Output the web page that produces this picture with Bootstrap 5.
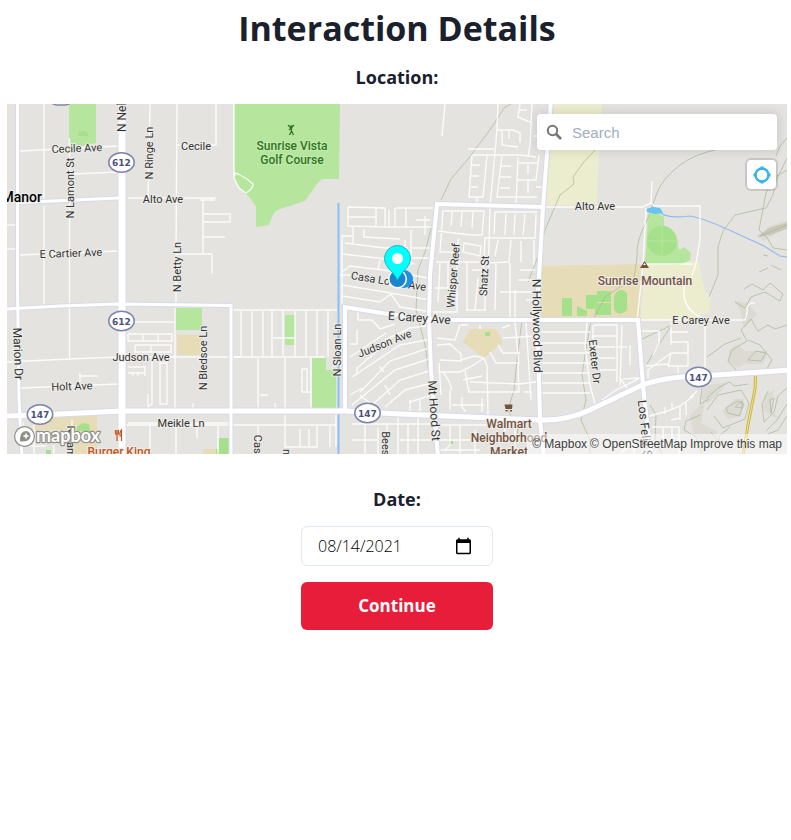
<!DOCTYPE html>
<html lang="en">
<head>
<meta charset="utf-8">
<meta name="viewport" content="width=device-width, initial-scale=1">
<title>Interaction Details</title>
<link href="https://cdn.jsdelivr.net/npm/bootstrap@5.3.0/dist/css/bootstrap.min.css" rel="stylesheet">
<style>
  body { font-family: "Segoe UI", "Open Sans", "Noto Sans", sans-serif; color: #1a202c; background: #fff; }
  .page { padding: 6px 4px 24px 7px; }
  .page-title { font-size: 34px; line-height: 44px; font-weight: 700; }
  .field-title { font-size: 18px; line-height: 28px; font-weight: 700; margin-top: 13px; margin-bottom: 13px; }
  .map-box { height: 350px; background: #e4e3df; }
  .map-canvas { display: block; width: 100%; height: 100%; }
  .map-tools { top: 10px; right: 9px; gap: 8px; }
  .geo-search { width: 240px; height: 36px; box-shadow: 0 0 10px 2px rgba(0,0,0,.1); border-radius: 4px; background: #fff; padding-left: 9px; gap: 9px; margin-right: 1px; }
  .geo-input { font: 15px "Liberation Sans", Arial, sans-serif; border: 0; outline: 0; background: transparent; min-width: 0; padding: 0; }
  .geo-input::placeholder { color: #a0aec0; opacity: 1; }
  .locate-btn { width: 33px; height: 33px; border: 2px solid rgba(0,0,0,.12); background: #fff; background-clip: padding-box; border-radius: 6px; }
  .map-credit { right: 0; bottom: 0; height: 20px; padding: 0 5px; font: 12px/20px "Liberation Sans", Arial, sans-serif; background: rgba(255,255,255,.5); gap: 3px; }
  .map-credit a { color: #404040; text-decoration: none; }
  .date-form { padding-top: 18px; }
  .entry { width: 192px; gap: 16px; }
  .date-input { height: 40px; border: 1px solid #e2e8f0; border-radius: 6px; padding: 0 16px; font-size: 16px; font-weight: 300; color: #000; }
  .date-input::-webkit-calendar-picker-indicator { width: 19px; height: 19px; padding: 1px; margin-right: 2px; }
  .go-btn { height: 48px; border-radius: 6px; background: #e71d3a; color: #fff; font-size: 17px; font-weight: 700; border: 0; }
  .go-btn:hover { background: #cf1833; color: #fff; }

  .minor path { fill: none; stroke: #fff; stroke-width: 1.4; stroke-opacity: .85; }
  .casing use { stroke: #d8daea; fill: none; }
  .fillroad use { stroke: #fff; fill: none; }
  .w3 { stroke-width: 3px; } .w4 { stroke-width: 4px; } .w5 { stroke-width: 5px; } .w7 { stroke-width: 7px; }
  .casing .w3 { stroke-width: 5px; } .casing .w4 { stroke-width: 6px; } .casing .w5 { stroke-width: 7px; } .casing .w7 { stroke-width: 9px; }
  .park { fill: #b6e59e; } .park2 { fill: #a5e08a; } .school { fill: #e6ddb8; } .field { fill: #ecedcf; }
  .trail path { fill: none; stroke: #a9ba9a; stroke-width: 1; stroke-opacity: .75; }
  .hill path { fill: #cfcec0; fill-opacity: .4; }
  .lbl text { font-family: Roboto, sans-serif; font-size: 11px; text-anchor: middle; fill: #333; stroke: #eeedea; stroke-width: 2px; paint-order: stroke; stroke-linejoin: round; }
  .lbl .big { font-size: 12px; }
  .lbl .town { font-size: 14px; font-weight: 500; fill: #000; text-anchor: end; }
  .lbl .poi { font-weight: 500; font-size: 12px; }
  .lbl .green { fill: #2f7421; stroke: #c3eaae; }
  .lbl .brown { fill: #745240; }
  .lbl .food { fill: #c4551d; }
  .shield ellipse, .shield rect { fill: #fff; stroke: #7d84ae; stroke-width: 1.6; }
  .shield text { font: 700 9px "DejaVu Sans", sans-serif; fill: #4a5080; text-anchor: middle; }
  .brand { font: 700 18px Lato, sans-serif; fill: #fff; stroke: #8f8f88; stroke-width: 2.4px; paint-order: stroke; stroke-linejoin: round; }
</style>
<script src="https://cdn.jsdelivr.net/npm/bootstrap@5.3.0/dist/js/bootstrap.bundle.min.js"></script>
</head>
<body>
<main class="page">
  <h1 class="page-title text-center mb-0">Interaction Details</h1>
  <h2 class="field-title text-center">Location:</h2>

  <section class="map-box position-relative overflow-hidden">
    <svg class="map-canvas" viewBox="7 104 780 350" preserveAspectRatio="xMidYMid slice" aria-hidden="true">
      <defs>
        <path id="r-marion" d="M17.500 100V285L19 400L22 458"/>
        <path id="r-nellis" d="M122 100V458"/>
        <path id="r-manor" d="M19 202.500L119 198"/>
        <path id="r-carey-w" d="M7 309L60 306L117 304L231 305.500V458"/>
        <path id="r-147" d="M5 416L60 414L122 411H345L400 414L540 420Q566 421 590 410L640 386Q662 377 700 376L791 370"/>
        <path id="r-carey" d="M345 411V307L388 314L440 320H638L643 386L651 458"/>
        <path id="r-hood" d="M543 207L437 204L430 275L429 320L431 370L436 430L438 458"/>
        <path id="r-holly" d="M551 100L543 207L537 310L540 420L544 458"/>
      </defs>
      <rect x="0" y="90" width="800" height="380" fill="#e4e3df"/>
      <!-- land use -->
      <g class="park">
        <path d="M69 104H96V143L80 146L69 143Z"/>
        <path d="M234 104H340L339 179H323Q320 180 317 184L305 201L280 209Q274 211 272 217L269 225L256 227V207Q250 196 242 191L234 178Z"/>
        <path d="M175.500 308H202V330H175.500Z"/>
        <path d="M285 315H295V345H285ZM312 358H326V370H336V408H312Z"/>
      </g>
      <path class="field" d="M554 104H602L596 205H545ZM645 265L699 261L705 292L711 296L709 313L690 319L640 320Z"/>
      <path class="school" d="M539 266L641 264L640 318H537ZM177 335H202V355H177ZM7 415H97V454H7ZM470 329H496L503 342L484 358L463 342ZM203 449H218V455H203Z"/>
      <path fill="#e4e3df" d="M7 415H33V454H7ZM24 430H70V454H24Z"/>
      <path class="park" d="M648 216Q653 209 664 217V226Q674 228 677 240L679 250L684 247L691 253L690 260L680 265L645 264Z"/>
      <circle class="park2" cx="662" cy="241" r="15"/>
      <path d="M662 226V257M647 241H679" stroke="#b6e59e" fill="none"/>
      <path class="park2" d="M78 133Q83 129 88 133V136H78ZM562 298H572V316H562ZM577 306L587 311V316H577ZM586 295H597V309H586ZM597 291H611V302H597ZM595 303H611V315H595ZM614 296Q619 286 627 293V310Q618 318 614 309ZM77 427L82 423L89 424L90 431H77ZM46 450H51V454H46ZM219 438H230V455H216V449H219ZM485 332H490V336H485ZM449 441H453V444H449Z"/>
      <!-- hills -->
      <g class="hill">
        <path d="M757 236L770 226L789 220V226L764 241Z"/>
        <path d="M729 350L738 344L744 351H768L763 364L745 364L738 368L729 362Z"/>
        <path d="M722 411L735 399L744 399L741 416L728 419Z"/>
        <path d="M704 386L727 382L721 391L707 404L701 398Z"/>
        <path d="M690 415L705 400L701 423L718 432L713 445L694 436Z"/>
        <path d="M765 395L774 390L770 410L782 420L772 416L763 410Z"/>
        <path d="M734 300L749 304L757 315L744 328L740 310Z"/>
      </g>
      <path d="M757 237L769 228L789 222V228L770 235Z" fill="#c9c6b8"/>
      <g class="trail">
        <path d="M511 104L504 108L492 127L468 159L451 179L441 200M432 225L425 252L418 270L416 310L425 345L433 400"/>
        <path d="M595 150L583 163L573 177L574 184L560 195L545 230L536 262L528 282M522 320L517 360L514 390L508 410L518 430L514 450"/>
        <path d="M621 104L630 100M715 150Q695 154 680 165Q662 179 657 193L646 223Q636 240 637 258L634 278L605 297L590 325L585 355L582 375L586 400L581 420L590 440V454"/>
        <path d="M787 138L780 146L776 156M787 158L776 181L773 195L766 208L735 215L723 231L718 247V275L709 297"/>
        <path d="M787 170L775 177L766 193L759 230L768 239L773 248L787 250M787 225L760 236M763 255L768 256M771 265L781 270M759 272L768 268"/>
        <path d="M744 289L752 284L763 290L770 283L783 294L780 301L765 292L751 297M751 297L745 308L735 302M787 325L775 329L768 325L758 331L751 319M751 319L741 330L747 341L732 350L728 361L738 372H765L772 360L760 345L748 340"/>
        <path d="M748 360L756 351L766 353L761 361ZM735 407L742 401V408ZM726 408L738 401L744 404L739 416L728 413ZM707 398L718 388L729 382L735 386L748 384M702 388L700 404L709 399M707 410L718 395L741 390L749 403L745 419L723 428L714 416M702 454L696 437L684 430L686 421L700 415M730 427L719 436L720 443L711 432M787 388L778 396L774 412L764 422L762 404L768 391M787 404L777 420L766 431M770 400L771 413L774 398ZM787 416L778 430L768 434"/>
        <path d="M640 340L672 325L655 350L647 364M650 405L656 415L655 440L662 454M707 357L725 344L741 338"/>
      </g>
      <!-- water -->
      <path d="M338.500 203V455" stroke="#89bff7" stroke-width="2" fill="none"/>
      <path d="M660 212Q666 219 690 216Q704 218 740 235L764 246L780 256L789 257" fill="none" stroke="#93baf0" stroke-width="1.200"/>
      <path d="M646 209L653 207L660 208L663 213L655 214L647 212Z" fill="#64c3f3"/>
      <!-- side streets -->
      <g class="minor">
        <path d="M44 104V199M44 206V305M69.500 138V360M20 151L118 146M74 174L118 172M7 225H15M7 249H15M20 255L118 251M7 362L70 359L118 357L240 357M21 388L118 384M80 373V382M80 376H98"/>
        <path d="M150 104L148 199M177 104L176 255V306M128 198H216M216 104V145H176M176 254H212M200 200H215M203 200V254M203 214H230V222H203M203 237H225M212 254V274"/>
        <path d="M128 322H174M128 334H172V341H128V334M143 334V341M158 334V341M135 345H171V352H135V345M151 345V352M128 367H145V376M128 373H145M175 308V410M152 357V404L148 407V394M160 363H167V404H160ZM193 403V410M133 372V376M138 372V376M207 368H200"/>
        <path d="M233 310H337M241 311V357M252 311V357M263 311V357M272 311V357M283 311V357M295 311V357M306 311V357M317 311V357M328 311V357M233 357H325M273 338H295M258 358V408M285 358V408M302 369H307V392H302V369M302 392H311M260 395H268M275 403V410M311 358V408"/>
        <path d="M128 423H229M124 425H336M150 423V454M176 423V454M197 423V438M258 425V454M285 415V447H317V425M300 429V447M309 429V447M330 425V447M336 414V447M218 425V455"/>
        <path d="M234 104V178L239 188L246 193Q253 189 253 184L247 179L240 175Q234 171 235 176" stroke-width="2"/>
        <path d="M348 207L385 208V227L348 226ZM348 217H376M376 208V227M385 227H433M353 227V245M342 235V304M342 236H352M364 229V237L400 239M389 210V228M396 208H433M406 208V227M395 208V228M345 243L385 248H408M342 254L378 258L415 264M342 272L350 266L383 270L428 278M380 260L378 270M342 285L385 292L430 300M342 296L380 302L391 294L400 307L432 312M340 275H352M405 240V248M411 230V265M416 220H430M416 227H430M425 216V235M411 248H430M409 258H429"/>
        <path d="M445 104L442 136M498 104L497 130L490 207M468 149H494M473 155H520L536 157M497 130H513L520 133V143M520 104L518 117L532 123M532 104L530 145L528 157M520 110H527M502 130V145L518 147M509 130V139M534 136H545M472 155L469 197H483L487 156M471 165H480M471 176H479M471 187H478M502 156L497 197H537M500 166H511M500 177H511M500 188H510M518 157L516 205M528 165V174M519 163H538M518 180H536L539 155M528 180V193M477 197V206M536 187H542"/>
        <path d="M442 211H484L482 235H470L438 231M443 211L440 252H456L459 238M452 212L451 226M462 212L461 227M473 212L472 228M495 212H537M495 212L494 234M506 214L505 235M515 214L514 235M525 214L523 235M536 214L535 238H485L483 277M498 240L495 256M511 240L509 262L487 263M521 241V262M534 240V265M490 207L488 280M464 243L481 246L480 256L463 252ZM436 262H480M440 263L438 302M448 263V288H435M457 264V312H433M467 262V310H485V280M472 270H487M478 278L475 310M496 263L495 310M510 263V320M520 270H535M518 280H536M526 300H536M515 290V318M533 305V319M500 292H535"/>
        <path d="M460 325L455 340L437 338M461 325H468M437 345L450 344L461 354V361L440 360M480 325V329M502 328L510 325M503 338L536 336M515 322L519 365M498 345L503 353H520M490 352L496 363H519M461 360L474 356L484 358L487 366L488 415M438 372L460 372L474 365L484 358M465 371L469 392H519L518 365M470 382L520 384M443 372L449 381L452 390M463 380L482 376M450 390V410M452 405H484M462 397V407L466 412M482 398V412M526 323L531 400M518 384L536 382M532 392H524M439 363L441 395"/>
        <path d="M432 325L410 328L385 340M432 339L400 345L352 377M432 347L390 361L360 392M432 358L395 370L352 405M432 370L400 380L372 405M432 383L405 390L385 407M432 395L410 402M358 311V320H372L380 329L395 324M350 344H357V330M350 357L386 333M357 375V368L384 345M380 367L384 372M385 385L390 395M372 405L360 395M350 395L362 388M410 400V412M420 400V412"/>
        <path d="M541 332H590M541 343H590M541 353H590M541 363H590M541 373H590M541 383H590M541 393H590M587 323L585 345L590 385L596 408M594 325H617V382M592 336H616M592 347H615M592 358H615M600 370H616M602 400L616 390L640 378M622 325L620 385M630 345V365M617 347H627M620 378L628 390M623 379L640 378M593 325V360"/>
        <path d="M641 331H659V343L653 355M671 322V345M671 332H688M671 342H688V353H671L648 370V378M671 353L668 366H688V354M646 366L668 364M678 366V373M705 326V370M649 416L665 412L680 406L694 396M665 414V407M672 410V403M680 406V420M686 403V415M690 398L697 391M671 420L680 418M652 427H679V454M672 427V437M663 427V445M634 440V454M621 453L635 440"/>
        <path d="M545 207H643L651 203L652 181M651 203L655 206H700V240L696 263L692 276M646 208L643 265L637 320M641 264H693M689 278Q683 282 684 297Q687 312 703 318M641 320H745Q748 313 747 307Q750 302 755 303"/>
        <path d="M352 424H430M365 416V454M378 428V454M387 424V454M398 415V454M408 424V454M418 415V454M352 440H378M400 440H433M440 425H505M450 425V445L445 450M460 425V454M475 430V454M440 450H480M505 415V432M515 424V454M440 440H490M23 422V454M34 425V454M72 420V454M54 445V454M30 446H46"/>
      </g>
      <!-- arterial roads: outline below, white on top -->
      <g class="casing">
        <use href="#r-marion" class="w3"/><use href="#r-manor" class="w3"/><use href="#r-carey-w" class="w3"/><use href="#r-carey" class="w4"/><use href="#r-hood" class="w4"/><use href="#r-holly" class="w4"/><use href="#r-147" class="w5"/><use href="#r-nellis" class="w7"/>
      </g>
      <g class="fillroad">
        <use href="#r-marion" class="w3"/><use href="#r-manor" class="w3"/><use href="#r-carey-w" class="w3"/><use href="#r-carey" class="w4"/><use href="#r-hood" class="w4"/><use href="#r-holly" class="w4"/><use href="#r-147" class="w5"/><use href="#r-nellis" class="w7"/>
      </g>
      <path d="M755.500 376L755 389L748 425L743 456" fill="none" stroke="#cdb548" stroke-width="3"/>
      <path d="M755.500 376L755 389L748 425L743 456" fill="none" stroke="#f4e37b" stroke-width="1"/>
      <!-- street and place names -->
      <g class="lbl">
        <text class="town" x="42" y="202">Manor</text>
        <text transform="translate(77 152) rotate(-2)">Cecile Ave</text>
        <text x="196" y="150">Cecile</text>
        <text x="163" y="203">Alto Ave</text>
        <text x="595" y="210">Alto Ave</text>
        <text transform="translate(71 257) rotate(-2)">E Cartier Ave</text>
        <text x="141" y="361">Judson Ave</text>
        <text transform="translate(72 390) rotate(-2)">Holt Ave</text>
        <text x="181" y="427">Meikle Ln</text>
        <text x="701" y="324">E Carey Ave</text>
        <text class="big" transform="translate(126 132) rotate(-90)" style="text-anchor:start">N Nellis Blvd</text>
        <text transform="translate(74 188) rotate(-90)">N Lamont St</text>
        <text transform="translate(153 153) rotate(-90)">N Ringe Ln</text>
        <text transform="translate(181 267) rotate(-90)">N Betty Ln</text>
        <text transform="translate(207 358) rotate(-90)">N Bledsoe Ln</text>
        <text transform="translate(341 350) rotate(-90)">N Sloan Ln</text>
        <text class="big" transform="translate(14 354) rotate(88)">Marion Dr</text>
        <text transform="translate(67 456) rotate(90)">N Lamont St</text>
        <text transform="translate(254 462) rotate(90)">Casa Linda</text>
        <text transform="translate(382 457) rotate(90)">Beesley Dr</text>
        <text transform="translate(289 452) rotate(-90)">u</text>
        <text transform="translate(388 285) rotate(9)">Casa Loma Ave</text>
        <text class="big" transform="translate(419 322) rotate(4)">E Carey Ave</text>
        <text transform="translate(386 347) rotate(-22)">Judson Ave</text>
        <text transform="translate(457 276) rotate(-85)">Whisper Reef</text>
        <text transform="translate(488 276) rotate(-87)">Shatz St</text>
        <text class="big" transform="translate(533 326) rotate(89)">N Hollywood Blvd</text>
        <text class="big" transform="translate(430 411) rotate(86)">Mt Hood St</text>
        <text transform="translate(591 362) rotate(84)">Exeter Dr</text>
        <text class="big" transform="translate(641 431) rotate(84)">Los Feliz St</text>
        <text class="poi green" x="292" y="150">Sunrise Vista</text>
        <text class="poi green" x="292" y="164">Golf Course</text>
        <text class="poi brown" x="645" y="285">Sunrise Mountain</text>
        <text class="poi brown" x="509" y="428">Walmart</text>
        <text class="poi brown" x="509" y="442">Neighborhood</text>
        <text class="poi brown" x="509" y="456">Market</text>
        <text class="poi food" x="119" y="456">Burger King</text>
      </g>
      <!-- place symbols -->
      <path d="M288 125L291 128L294 125M291.500 128V131L289.500 135M291.500 131L293.500 135M291 128L289 130" fill="none" stroke="#2f7421" stroke-width="1.300"/><circle cx="291.500" cy="126.500" r="1.300" fill="#2f7421"/>
      <path d="M644.500 261L649 268H640Z" fill="#745240"/><path d="M644.500 263L646 265H643Z" fill="#fff"/>
      <path d="M504.500 404.500H512.500L512 409H505.500ZM505.500 410H507.500V411.500H505.500ZM510 410H512V411.500H510Z" fill="#745240"/>
      <path d="M115.500 430V434H117V441M118.500 430V434H117V430M121.500 441V430Q119.500 432 120 436H121" fill="none" stroke="#c4551d" stroke-width="1.200"/>
      <!-- route shields -->
      <g class="shield">
        <rect x="48" y="86" width="26" height="19" rx="9.500"/>
        <ellipse cx="121.500" cy="162.500" rx="12.700" ry="9.700"/><text x="121.500" y="166">612</text>
        <ellipse cx="121.500" cy="321" rx="12.700" ry="9.700"/><text x="121.500" y="324.500">612</text>
        <ellipse cx="40" cy="414.500" rx="12.700" ry="9.700"/><text x="40" y="418">147</text>
        <ellipse cx="367.500" cy="413" rx="12.700" ry="9.700"/><text x="367.500" y="416.500">147</text>
        <ellipse cx="698.500" cy="377" rx="12.700" ry="9.700"/><text x="698.500" y="380.500">147</text>
      </g>
      <!-- current position and pin -->
      <circle cx="404" cy="279" r="9" fill="#1f8fe8"/>
      <circle cx="397.500" cy="279" r="9.500" fill="#fff"/>
      <circle cx="397.500" cy="279" r="8" fill="#1b84cf"/>
      <path d="M397.500 280C394 272 384.500 267 384.500 258.500A13 13 0 0 1 410.500 258.500C410.500 267 401 272 397.500 280Z" fill="#0ff" stroke="#17b9bd"/>
      <circle cx="397.500" cy="258.500" r="5.500" fill="#fff"/>
      <!-- provider mark -->
      <circle cx="24.500" cy="436.500" r="10.500" fill="#8f8f88"/><circle cx="24.500" cy="436.500" r="9.300" fill="#fff"/>
      <path d="M20 441.500Q19.500 431 26 431A5 5 0 0 1 30.500 436Q30.500 442 20 441.500Z" fill="#8f8f88"/>
      <path d="M26 432.500L27 435L29.500 436L27 437L26 439.500L25 437L22.500 436L25 435Z" fill="#fff"/>
      <text class="brand" x="36" y="442">mapbox</text>
    </svg>

    <div class="map-tools position-absolute d-flex flex-column align-items-end">
      <div class="geo-search d-flex align-items-center">
        <svg width="17" height="17" viewBox="0 0 17 17" fill="none" stroke="#757575" stroke-width="2" aria-hidden="true"><circle cx="6.500" cy="6.500" r="4.700"/><path d="M10 10L15 15" stroke-width="2.600"/></svg>
        <input class="geo-input flex-grow-1" type="text" placeholder="Search" aria-label="Search">
      </div>
      <button class="locate-btn d-flex align-items-center justify-content-center p-0" type="button" aria-label="Locate">
        <svg width="20" height="20" viewBox="0 0 20 20" fill="none" stroke="#33b5e5" stroke-width="2.300" aria-hidden="true"><circle cx="10" cy="10" r="6.500"/><path stroke-width="3" d="M10 1.500V4.500M10 15.500V18.500M1.500 10H4.500M15.500 10H18.500"/></svg>
      </button>
    </div>
    <div class="map-credit position-absolute d-flex">
      <a href="#">© Mapbox</a><a href="#">© OpenStreetMap</a><a href="#">Improve this map</a>
    </div>
  </section>

  <form class="date-form d-flex flex-column align-items-center">
    <label class="field-title" for="visit-date">Date:</label>
    <div class="entry d-flex flex-column">
      <input class="date-input w-100" id="visit-date" type="date" value="2021-08-14">
      <button class="go-btn btn w-100" type="button">Continue</button>
    </div>
  </form>
</main>
</body>
</html>
